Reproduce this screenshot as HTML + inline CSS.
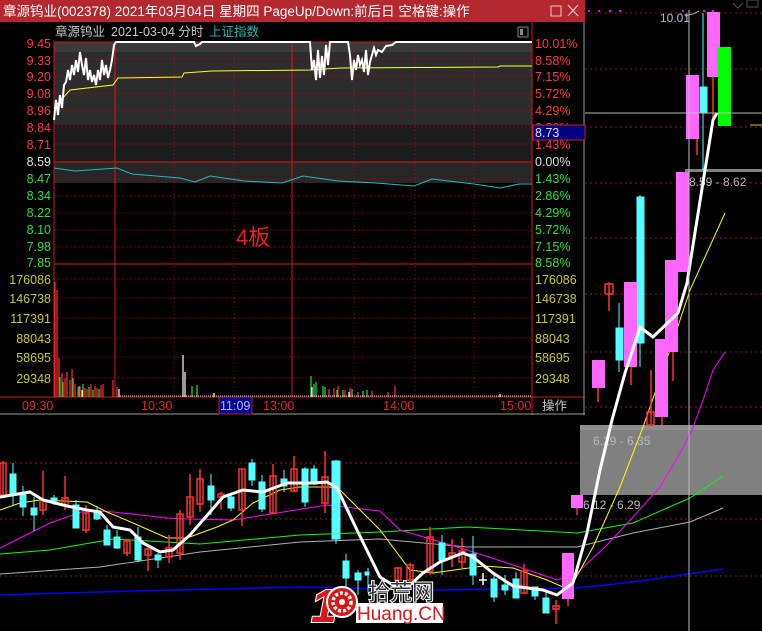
<!DOCTYPE html>
<html><head><meta charset="utf-8"><style>
html,body{margin:0;padding:0;background:#000;width:762px;height:631px;overflow:hidden}
svg text{font-family:"Liberation Sans","Noto Sans CJK SC",sans-serif}
</style></head><body>
<svg width="762" height="631" viewBox="0 0 762 631" xmlns="http://www.w3.org/2000/svg">
<rect width="762" height="631" fill="#000"/>
<g stroke="#8a1a1a" stroke-dasharray="2,3" stroke-width="1">
<line x1="585" y1="13" x2="762" y2="13"/><line x1="585" y1="69" x2="762" y2="69"/><line x1="585" y1="127" x2="762" y2="127"/><line x1="585" y1="183" x2="762" y2="183"/><line x1="585" y1="238" x2="762" y2="238"/><line x1="585" y1="294" x2="762" y2="294"/><line x1="585" y1="352" x2="762" y2="352"/><line x1="585" y1="407" x2="762" y2="407"/>
<line x1="0" y1="463" x2="762" y2="463"/><line x1="0" y1="519" x2="762" y2="519"/><line x1="0" y1="576" x2="762" y2="576"/>
</g>
<rect x="580" y="425" width="182" height="70" fill="#808080"/>
<rect x="580" y="425" width="182" height="5" fill="#8e8e8e"/>
<text x="593" y="445" font-size="12" fill="#b8b8b8">6.29 - 6.35</text>
<text x="583" y="509" font-size="12" fill="#b8b8b8">6.12 - 6.29</text>
<rect x="685" y="169" width="77" height="3" fill="#808080"/>
<text x="689" y="186" font-size="12" fill="#b8b8b8">8.59 - 8.62</text>
<g fill="none">
<polyline stroke="#0000ff" stroke-width="1.5" points="0,595 133,591 300,587 433,590 577,588 633,582 723,569"/>
<polyline stroke="#b0b0b0" stroke-width="1" points="0,574 100,567 200,552 300,542 380,539 467,547 577,547 633,533 690,522 723,508"/>
<polyline stroke="#00ff00" stroke-width="1" points="0,554 50,550 113,539 200,544 300,535 380,532 467,527 577,533 633,523 690,498 723,476"/>
<polyline stroke="#ff00ff" stroke-width="1" points="0,548 20,538 50,523 87,510 113,512 167,518 187,519 233,520 277,513 327,505 380,511 400,530 467,550 507,563 557,580 577,573 607,545 633,517 660,487 680,453 692,430 703,400 713,370 725,352"/>
<polyline stroke="#ffff00" stroke-width="1" points="0,510 20,503 40,500 87,502 107,512 133,523 167,538 187,538 217,527 233,520 253,503 280,490 300,487 330,487 340,490 380,530 410,570 433,573 483,566 513,568 547,580 563,587 573,583 593,547 620,487 643,427 670,350 690,290 725,213"/>
</g>
<g stroke-width="1">
<g fill="none" stroke="#ff3030" stroke-width="1.5">
<path d="M3,461V497M0,463h6v32h-6z"/>
<path d="M43,471V515M40,500h6v10h-6z"/>
<path d="M65,476V510M62,498h6v7h-6z"/>
<path d="M86,505V533M83,513h6v17h-6z"/>
<path d="M127,540V556M124,541h6v12h-6z"/>
<path d="M148,545V571M145,549h6v6h-6z"/>
<path d="M169,535V563M166,548h6v9h-6z"/>
<path d="M180,510V560M177,514h6v39h-6z"/>
<path d="M190,474V525M187,497h6v20h-6z"/>
<path d="M200,469V512M197,479h6v25h-6z"/>
<path d="M221,492V509M218,494h6v3h-6z"/>
<path d="M242,469V526M239,469h6v41h-6z"/>
<path d="M273,464V514M270,476h6v37h-6z"/>
<path d="M294,456V492M291,469h6v22h-6z"/>
<path d="M325,451V513M322,477h6v26h-6z"/>
<path d="M398,567V585M395,568h6v12h-6z"/>
<path d="M410,563V585M407,565h6v15h-6z"/>
<path d="M430,527V575M427,537h6v34h-6z"/>
<path d="M452,539V567M449,553h6v3h-6z"/>
<path d="M462,538V568M459,551h6v11h-6z"/>
<path d="M524,564V593M521,571h6v22h-6z"/>
<path d="M556,600V624M553,606h6v3h-6z"/>
<path d="M609,282V311M605,284h8v10h-8z"/>
<path d="M651,370V425M647,412h7v13h-7z"/>
</g>
<g fill="#54ffff" stroke="#54ffff">
<path d="M13,463V505M10,474h6v20h-6z"/>
<path d="M23,486V516M20,495h6v12h-6z"/>
<path d="M34,497V531M31,508h6v7h-6z"/>
<path d="M54,495V505M51,498h6v3h-6z"/>
<path d="M76,500V528M73,505h6v23h-6z"/>
<path d="M97,506V520M94,512h6v7h-6z"/>
<path d="M107,525V545M104,530h6v15h-6z"/>
<path d="M117,530V549M114,537h6v11h-6z"/>
<path d="M138,527V562M135,537h6v23h-6z"/>
<path d="M158,553V568M155,555h6v5h-6z"/>
<path d="M211,474V515M208,486h6v14h-6z"/>
<path d="M231,495V511M228,497h6v11h-6z"/>
<path d="M252,459V486M249,463h6v17h-6z"/>
<path d="M262,475V512M259,482h6v27h-6z"/>
<path d="M284,470V492M281,479h6v7h-6z"/>
<path d="M305,467V507M302,469h6v33h-6z"/>
<path d="M314,465V485M311,469h6v15h-6z"/>
<path d="M336,460V544M332,461h8v78h-8z"/>
<path d="M346,554V594M343,561h6v17h-6z"/>
<path d="M358,570V595M355,573h6v7h-6z"/>
<path d="M368,568V592M365,572h4v3h-4z"/>
<path d="M442,535V575M439,543h6v17h-6z"/>
<path d="M473,536V585M470,554h6v21h-6z"/>
<path d="M494,572V602M491,579h6v18h-6z"/>
<path d="M505,575V595M502,585h6v5h-6z"/>
<path d="M516,572V598M513,579h6v19h-6z"/>
<path d="M535,587V600M532,587h6v9h-6z"/>
<path d="M546,592V613M543,598h6v15h-6z"/>
<path d="M619,303V372M616,328h7v32h-7z"/>
<path d="M640,195V367M637,197h7v146h-7z"/>
<path d="M703,13V170M700,87h7v26h-7z"/>
</g>
<path d="M483,573V585M479,580h8" stroke="#fff" stroke-width="1.5"/>
<g fill="#ff66ff">
<rect x="562" y="553" width="12" height="46"/>
<rect x="571" y="495" width="12" height="13"/>
<rect x="592" y="360" width="13" height="28"/>
<rect x="624" y="282" width="13" height="85"/>
<rect x="655" y="339" width="13" height="78"/>
<rect x="665" y="260" width="13" height="92"/>
<rect x="676" y="172" width="13" height="100"/>
<rect x="686" y="75" width="13" height="64"/>
<rect x="707" y="12" width="13" height="65"/>
</g>
<g stroke="#ff3030" stroke-width="1.5">
<path d="M568,599V606M577,508V515M598,388V402M631,367V385M662,417V425M673,352V381M697,139V155M713,77V125"/>
</g>
<rect x="718" y="47" width="13" height="79" fill="#00ff00"/>
</g>
<polyline fill="none" stroke="#fff" stroke-width="3" points="0,497 30,492 43,500 67,506 87,510 100,512 113,527 130,530 143,543 160,552 173,550 190,535 210,512 223,497 243,490 263,492 287,483 313,483 327,482 337,488 357,530 380,577 393,585 410,585 423,573 440,562 463,553 473,557 493,573 513,586 543,590 557,595 573,583 587,533 600,470 612,420 625,373 640,327 653,337 678,313 687,283 697,220 713,120 717,113"/>
<line x1="689" y1="10" x2="689" y2="631" stroke="#bbb" stroke-width="1"/>
<line x1="585" y1="113" x2="762" y2="113" stroke="#bbb" stroke-width="1"/>
<line x1="750" y1="125" x2="762" y2="125" stroke="#cc0" stroke-width="1"/>
<text x="660" y="22" font-size="12" fill="#a8c0d8">10.01</text>
<path d="M685,16 l8,-2 l6,-3" stroke="#aaa" fill="none"/>
<g fill="#ff00ff"><rect x="588" y="10" width="2" height="2"/><rect x="598" y="10" width="2" height="2"/><rect x="609" y="10" width="2" height="2"/><rect x="619" y="10" width="2" height="2"/><rect x="682" y="10" width="2" height="2"/><rect x="703" y="10" width="2" height="2"/><rect x="712" y="10" width="2" height="2"/></g>
<path d="M733,3 l5,5 l5,-5" stroke="#555" fill="none"/>
<rect x="747" y="0" width="11" height="7" fill="none" stroke="#555"/>

<!-- logo -->
<text x="311" y="622" font-size="46" font-weight="bold" font-style="italic" fill="#d81818" stroke="#fff" stroke-width="2" paint-order="stroke">1</text>
<circle cx="342" cy="602" r="15" fill="#d81818" stroke="#fff" stroke-width="2"/>
<circle cx="342" cy="602" r="9" fill="none" stroke="#fff" stroke-width="3.5" stroke-dasharray="3,2"/>
<circle cx="342" cy="602" r="3" fill="#fff"/>
<text x="368" y="600" font-size="22" fill="#333" stroke="#fff" stroke-width="2" paint-order="stroke">拾荒网</text>
<rect x="356" y="603" width="87" height="20" fill="#fff"/>
<text x="357" y="620" font-size="19" fill="#d81818">Huang.CN</text>

<!-- intraday popup -->
<rect x="0" y="0" width="585" height="415" fill="#000"/>
<rect x="0" y="0" width="585" height="22" fill="#b3282e"/>
<text x="3" y="16" font-size="13.5" fill="#fff">章源钨业(002378) 2021年03月04日 星期四 PageUp/Down:前后日 空格键:操作</text>
<rect x="551" y="6" width="10" height="10" fill="none" stroke="#e8c8c8"/>
<path d="M568,5l10,11M578,5l-10,11" stroke="#e8c8c8" stroke-width="1.2"/>
<text x="55" y="36" font-size="12.5" fill="#c8c8c8">章源钨业</text>
<text x="111" y="36" font-size="12.5" fill="#c8c8c8">2021-03-04 分时</text>
<text x="209" y="36" font-size="12.5" fill="#20b8b8">上证指数</text>
<rect x="518" y="27" width="10" height="10" fill="none" stroke="#888"/>
<rect x="520" y="29" width="3" height="6" fill="#888"/>
<rect x="54" y="42" width="478" height="10" fill="#3a3a3a"/>
<rect x="54" y="52" width="478" height="73" fill="#2c2c2c"/>
<rect x="54" y="125" width="478" height="37" fill="#1c1c1c"/>
<rect x="54" y="162" width="478" height="21" fill="#262626"/>
<g stroke="#a01818" stroke-dasharray="1,3">
<line x1="54" y1="59" x2="532" y2="59"/><line x1="54" y1="76" x2="532" y2="76"/><line x1="54" y1="93" x2="532" y2="93"/><line x1="54" y1="110" x2="532" y2="110"/><line x1="54" y1="127" x2="532" y2="127"/><line x1="54" y1="144" x2="532" y2="144"/><line x1="54" y1="179" x2="532" y2="179"/><line x1="54" y1="196" x2="532" y2="196"/><line x1="54" y1="213" x2="532" y2="213"/><line x1="54" y1="230" x2="532" y2="230"/><line x1="54" y1="247" x2="532" y2="247"/>
<line x1="54" y1="279" x2="532" y2="279"/><line x1="54" y1="298" x2="532" y2="298"/><line x1="54" y1="318" x2="532" y2="318"/><line x1="54" y1="338" x2="532" y2="338"/><line x1="54" y1="357" x2="532" y2="357"/><line x1="54" y1="378" x2="532" y2="378"/>
<line x1="174" y1="42" x2="174" y2="397"/><line x1="234" y1="42" x2="234" y2="397"/><line x1="354" y1="42" x2="354" y2="397"/><line x1="415" y1="42" x2="415" y2="397"/><line x1="474" y1="42" x2="474" y2="397"/>
</g>
<g stroke="#d01818" stroke-width="1">
<rect x="54" y="42" width="478" height="355" fill="none"/>
<line x1="54" y1="162" x2="532" y2="162"/><line x1="54" y1="264" x2="532" y2="264"/>
<line x1="115" y1="42" x2="115" y2="397"/><line x1="292" y1="42" x2="292" y2="397"/>
<line x1="0" y1="397" x2="585" y2="397"/><line x1="532" y1="22" x2="532" y2="415"/>
</g>
<line x1="584" y1="22" x2="584" y2="415" stroke="#999"/>
<line x1="0" y1="414" x2="585" y2="414" stroke="#999"/>
<polyline fill="none" stroke="#18c0c0" stroke-width="1" points="54,168 75,171 117,168 132,174 180,178 195,182 210,176 244,181 282,183 303,176 338,181 376,183 414,186 432,179 474,184 500,188 519,184 532,184"/>
<polyline fill="none" stroke="#ffff30" stroke-width="1" points="54,108 70,90 113,85 118,78 182,77 184,73 212,71 310,70 340,68 498,67 500,66 532,66"/>
<polyline fill="none" stroke="#fff" stroke-width="2" points="54,120 56,100 58,115 60,95 62,108 64,85 66,82 68,70 70,80 72,65 74,75 76,60 78,72 80,52 82,65 84,75 86,58 88,80 90,70 92,82 94,75 96,85 98,70 100,80 102,60 104,75 106,65 108,78 110,70 112,60 114,45 116,42 194,42 196,46 200,44 202,42 310,42 312,70 314,60 316,80 318,50 320,78 322,56 324,75 326,45 328,65 330,42 348,42 350,55 352,80 354,60 356,70 358,55 360,65 362,60 364,72 366,50 368,75 370,62 372,55 374,48 376,55 378,50 382,52 386,46 392,45 396,42 532,42"/>
<g stroke-width="1.2">
<path stroke="#ff3030" d="M55,397V282M57,397V290M59,397V358M62,397V373M65,397V378M67,397V372M70,397V380M72,397V369M75,397V384M78,397V387M80,397V386M85,397V388M87,397V389M91,397V384M95,397V386M97,397V388M101,397V385M103,397V384M113,397V380M117,397V387M329,397V389M334,397V388M338,397V386M345,397V390M350,397V388M358,397V392M372,397V391M388,397V392M395,397V386"/>
<path stroke="#30e030" d="M60,397V377M63,397V382M73,397V378M79,397V386M83,397V384M89,397V387M93,397V390M99,397V389M192,397V386M197,397V385M311,397V376M314,397V384M316,397V382M323,397V386M325,397V387M337,397V390M343,397V390M352,397V389M363,397V391M367,397V390"/>
<path stroke="#fff" d="M82,397V390M119,397V389M183,397V355M185,397V372M312,397V387M349,397V392M214,397V393M500,397V394"/>
<path stroke="#ddd" stroke-width="1" d="M120,396H532" stroke-dasharray="1,1"/>
</g>
<text x="236" y="245" font-size="22" fill="#e82020">4板</text>
<g font-size="12.5" text-anchor="end">
<text x="51" y="48" fill="#ff3a3a">9.45</text><text x="51" y="65" fill="#ff3a3a">9.33</text><text x="51" y="81" fill="#ff3a3a">9.20</text><text x="51" y="98" fill="#ff3a3a">9.08</text><text x="51" y="115" fill="#ff3a3a">8.96</text><text x="51" y="132" fill="#ff3a3a">8.84</text><text x="51" y="149" fill="#ff3a3a">8.71</text><text x="51" y="166" fill="#e0e0e0">8.59</text><text x="51" y="183" fill="#30e030">8.47</text><text x="51" y="200" fill="#30e030">8.34</text><text x="51" y="217" fill="#30e030">8.22</text><text x="51" y="234" fill="#30e030">8.10</text><text x="51" y="251" fill="#30e030">7.98</text><text x="51" y="267" fill="#30e030">7.85</text>
<g fill="#c8c830"><text x="51" y="284">176086</text><text x="51" y="303">146738</text><text x="51" y="323">117391</text><text x="51" y="343">88043</text><text x="51" y="362">58695</text><text x="51" y="383">29348</text></g>
</g>
<g font-size="12.5">
<text x="535" y="48" fill="#ff3a3a">10.01%</text><text x="535" y="65" fill="#ff3a3a">8.58%</text><text x="535" y="81" fill="#ff3a3a">7.15%</text><text x="535" y="98" fill="#ff3a3a">5.72%</text><text x="535" y="115" fill="#ff3a3a">4.29%</text><text x="535" y="132" fill="#ff3a3a">2.86%</text><text x="535" y="149" fill="#ff3a3a">1.43%</text><text x="535" y="166" fill="#e0e0e0">0.00%</text><text x="535" y="183" fill="#30e030">1.43%</text><text x="535" y="200" fill="#30e030">2.86%</text><text x="535" y="217" fill="#30e030">4.29%</text><text x="535" y="234" fill="#30e030">5.72%</text><text x="535" y="251" fill="#30e030">7.15%</text><text x="535" y="267" fill="#30e030">8.58%</text>
<g fill="#c8c830"><text x="535" y="284">176086</text><text x="535" y="303">146738</text><text x="535" y="323">117391</text><text x="535" y="343">88043</text><text x="535" y="362">58695</text><text x="535" y="383">29348</text></g>
</g>
<rect x="533" y="125" width="52" height="15" fill="#000080" stroke="#c02020"/>
<text x="535" y="137" font-size="12.5" fill="#e0e0ff">8.73</text>
<rect x="219" y="397" width="33" height="17" fill="#000090" stroke="#c02020"/>
<g font-size="12.5" fill="#e02828">
<text x="22" y="410">09:30</text><text x="141" y="410">10:30</text><text x="263" y="410">13:00</text><text x="383" y="410">14:00</text><text x="500" y="410">15:00</text>
</g>
<text x="220" y="410" font-size="12.5" fill="#b8b8ff">11:09</text>
<text x="542" y="410" font-size="12.5" fill="#c8c8c8">操作</text>
</svg>
</body></html>
